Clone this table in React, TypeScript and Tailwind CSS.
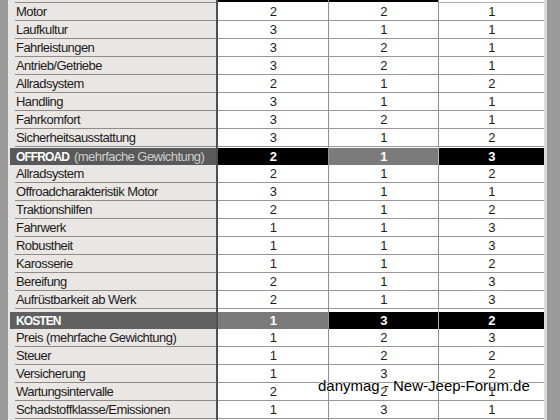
type Row = { label: string; v: [number, number, number] };

const fahr: Row[] = [
  { label: "Motor", v: [2, 2, 1] },
  { label: "Laufkultur", v: [3, 1, 1] },
  { label: "Fahrleistungen", v: [3, 2, 1] },
  { label: "Antrieb/Getriebe", v: [3, 2, 1] },
  { label: "Allradsystem", v: [2, 1, 2] },
  { label: "Handling", v: [3, 1, 1] },
  { label: "Fahrkomfort", v: [3, 2, 1] },
  { label: "Sicherheitsausstattung", v: [3, 1, 2] },
];

const offroad: Row[] = [
  { label: "Allradsystem", v: [2, 1, 2] },
  { label: "Offroadcharakteristik Motor", v: [3, 1, 1] },
  { label: "Traktionshilfen", v: [2, 1, 2] },
  { label: "Fahrwerk", v: [1, 1, 3] },
  { label: "Robustheit", v: [1, 1, 3] },
  { label: "Karosserie", v: [1, 1, 2] },
  { label: "Bereifung", v: [2, 1, 3] },
  { label: "Aufrüstbarkeit ab Werk", v: [2, 1, 3] },
];

const kosten: Row[] = [
  { label: "Preis (mehrfache Gewichtung)", v: [1, 2, 3] },
  { label: "Steuer", v: [1, 2, 2] },
  { label: "Versicherung", v: [1, 3, 2] },
  { label: "Wartungsintervalle", v: [2, 2, 1] },
  { label: "Schadstoffklasse/Emissionen", v: [1, 3, 1] },
];

const DataRow = ({ row }: { row: Row }) => (
  <div className="flex h-[18px]">
    <div className="w-[210px] bg-[#e9e6e4] pl-[7px] border-r-2 border-[#505050]">
      <div className="h-full border-b border-[#8e8b89] pl-[1px] flex items-center">
        {row.label}
      </div>
    </div>
    <div className="w-[111px] bg-white border-r border-[#8f8f8f]">
      <div className="h-full border-b border-[#979797] flex items-center justify-center">
        {row.v[0]}
      </div>
    </div>
    <div className="w-[110px] bg-white border-r border-[#8f8f8f]">
      <div className="h-full border-b border-[#979797] flex items-center justify-center">
        {row.v[1]}
      </div>
    </div>
    <div className="flex-1 bg-white">
      <div className="h-full border-b border-[#979797] flex items-center justify-center">
        {row.v[2]}
      </div>
    </div>
  </div>
);

const HeaderRow = ({
  title,
  sub,
  v,
  colors,
  rowClass,
}: {
  title: string;
  sub?: string;
  v: [number, number, number];
  colors: [string, string, string, string];
  rowClass: string;
}) => (
  <div className={`flex ${rowClass} bg-white`}>
    <div className="w-[210px] bg-[#e9e6e4] pl-[2px] border-r-2 border-[#505050] flex flex-col justify-end">
      <div className={`h-[17px] ${colors[0]} pl-[6px] flex items-center`}>
        <span className="font-bold text-white text-[12px] tracking-[-0.9px]">{title}</span>
        {sub && <span className="ml-[5px] text-[#cfcfcf]">{sub}</span>}
      </div>
    </div>
    <div className="w-[111px] border-r border-[#8f8f8f] flex flex-col justify-end">
      <div className={`h-[17px] ${colors[1]} flex items-center justify-center font-bold text-white`}>
        {v[0]}
      </div>
    </div>
    <div className="w-[110px] border-r border-[#b5b5b5] flex flex-col justify-end">
      <div className={`h-[17px] ${colors[2]} flex items-center justify-center font-bold text-white`}>
        {v[1]}
      </div>
    </div>
    <div className="flex-1 flex flex-col justify-end">
      <div className={`h-[17px] ${colors[3]} flex items-center justify-center font-bold text-white`}>
        {v[2]}
      </div>
    </div>
  </div>
);

export default function App() {
  return (
    <div className="relative w-[560px] h-[420px] overflow-hidden flex bg-[#9b9b9b] font-['Liberation_Sans',Arial,sans-serif] text-[13px] tracking-[-0.55px] text-[#1c1c1c] leading-none">
      <div className="w-[8px] bg-[#9b9b9b]" />
      <div className="w-[536px] flex flex-col">
        {/* cut-off row above */}
        <div className="flex h-[3px]">
          <div className="w-[210px] bg-[#e9e6e4] pl-[7px] border-r-2 border-[#505050]">
            <div className="h-full border-b border-[#8e8b89]" />
          </div>
          <div className="w-[111px] bg-white border-r border-[#8f8f8f]">
            <div className="h-[2px] bg-black" />
          </div>
          <div className="w-[110px] bg-white border-r border-[#8f8f8f]">
            <div className="h-[2px] bg-black" />
          </div>
          <div className="flex-1 bg-white">
            <div className="h-full border-b border-[#b0b0b0]" />
          </div>
        </div>
        {fahr.map((r, i) => (
          <DataRow key={"f" + i} row={r} />
        ))}
        <HeaderRow
          title="OFFROAD"
          sub="(mehrfache Gewichtung)"
          v={[2, 1, 3]}
          colors={["bg-[#595959]", "bg-black", "bg-[#7b7b7b]", "bg-black"]}
          rowClass="h-[18px]"
        />
        {offroad.map((r, i) => (
          <DataRow key={"o" + i} row={r} />
        ))}
        <HeaderRow
          title="KOSTEN"
          v={[1, 3, 2]}
          colors={["bg-[#616161]", "bg-[#7a7a7a]", "bg-black", "bg-black"]}
          rowClass="h-[20px] pb-[0px] [&>div]:justify-start [&>div]:pt-[3px]"
        />
        {kosten.map((r, i) => (
          <DataRow key={"k" + i} row={r} />
        ))}
        <div className="flex-1 flex">
          <div className="w-[210px] bg-[#e9e6e4] border-r-2 border-[#505050]" />
          <div className="w-[111px] bg-white border-r border-[#8f8f8f]" />
          <div className="w-[110px] bg-white border-r border-[#8f8f8f]" />
          <div className="flex-1 bg-white" />
        </div>
      </div>
      <div className="w-[3px] bg-[#dadada]" />
      <div className="flex-1 bg-[#9b9b9b]" />

      <div className="absolute left-[318px] top-[378px] text-[15px] leading-[15px] tracking-normal text-black whitespace-nowrap [text-shadow:0_0_2px_#fff,0_0_2px_#fff,0_0_1px_#fff]">
        danymag - New-Jeep-Forum.de
      </div>
    </div>
  );
}
